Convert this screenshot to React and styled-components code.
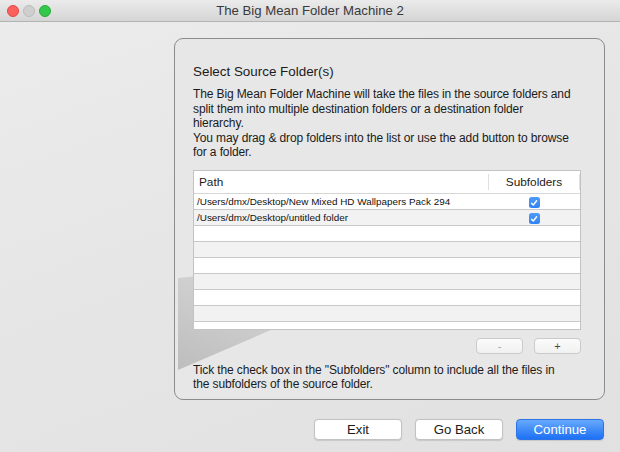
import React from 'react'
import styled, { createGlobalStyle } from 'styled-components'

const GlobalStyle = createGlobalStyle`
  html, body {
    margin: 0;
    padding: 0;
  }
  body {
    font-family: 'Liberation Sans', Arial, sans-serif;
    color: #1b1b1b;
  }
`;

const Window = styled.div`
  width: 620px;
  height: 452px;
  display: flex;
  flex-direction: column;
  background: linear-gradient(160deg, #ececec 0%, #e6e6e6 45%, #e1e1e1 100%);
  overflow: hidden;
`;

const TitleBar = styled.div`
  height: 21px;
  flex-shrink: 0;
  display: grid;
  grid-template-columns: 1fr auto 1fr;
  align-items: center;
  background: linear-gradient(#ebebeb, #d5d5d5);
  border-bottom: 1px solid #b3b3b3;
`;

const Lights = styled.div`
  display: flex;
  gap: 4px;
  padding-left: 7px;
`;

const Light = styled.span`
  width: 12px;
  height: 12px;
  border-radius: 50%;
  box-sizing: border-box;
  background: ${p => p.$color};
  border: 1px solid ${p => p.$edge};
`;

const Title = styled.div`
  font-size: 13.2px;
  color: #3a3a3a;
`;

const Body = styled.div`
  flex: 1;
  display: flex;
  flex-direction: column;
  align-items: flex-end;
  padding: 16px 15px 0 0;
`;

const Panel = styled.div`
  position: relative;
  box-sizing: border-box;
  width: 431px;
  height: 362px;
  border: 1px solid #8c8c8c;
  border-radius: 9px;
  background: #e7e7e7;
  padding: 25px 23px 0 18px;
  display: flex;
  flex-direction: column;
`;

const Art = styled.svg`
  position: absolute;
  left: 0;
  top: 0;
  pointer-events: none;
`;

const Content = styled.div`
  position: relative;
  display: flex;
  flex-direction: column;
`;

const Heading = styled.h2`
  margin: 0;
  font-size: 13.4px;
  line-height: 16px;
  font-weight: normal;
`;

const Text = styled.p`
  margin: ${p => p.$top || 0}px 0 0;
  padding-right: 8px;
  font-size: 12px;
  letter-spacing: -0.12px;
  line-height: ${p => p.$lh || 14.5}px;
`;

const Table = styled.div`
  margin-top: 10px;
  height: 160px;
  box-sizing: border-box;
  border: 1px solid #c3c3c3;
  background: #fff;
  display: flex;
  flex-direction: column;
`;

const HeaderRow = styled.div`
  height: 22px;
  flex-shrink: 0;
  display: grid;
  grid-template-columns: 294px 1fr;
  align-items: center;
  border-bottom: 1px solid #d6d6d6;
  font-size: 11.8px;
`;

const HeaderCell = styled.div`
  padding-left: ${p => (p.$center ? 0 : 5)}px;
  text-align: ${p => (p.$center ? 'center' : 'left')};
  border-left: ${p => (p.$center ? '1px solid #e0e0e0' : 'none')};
  border-right: ${p => (p.$center ? '1px solid #e0e0e0' : 'none')};
  line-height: 16px;
`;

const Rows = styled.div`
  flex: 1;
  overflow: hidden;
`;

const Row = styled.div`
  height: 15px;
  display: grid;
  grid-template-columns: 294px 1fr;
  align-items: center;
  border-bottom: 1px solid #c9c9c9;
  background: ${p => (p.$alt ? '#f2f2f2' : '#fff')};
  font-size: 9.9px;
`;

const PathCell = styled.div`
  padding-left: 3px;
  white-space: nowrap;
  color: #111;
`;

const CheckCell = styled.div`
  display: flex;
  justify-content: center;
  padding-top: 3px;
`;

const Check = styled.span`
  width: 11px;
  height: 11px;
  border-radius: 2.5px;
  background: linear-gradient(#4c9bfa, #2f83f4);
  display: flex;
  align-items: center;
  justify-content: center;
`;

const ListButtons = styled.div`
  display: flex;
  justify-content: flex-end;
  gap: 11px;
  margin-top: 8px;
`;

const SmallButton = styled.button`
  width: 47px;
  height: 16px;
  padding: 0;
  border: 1px solid #cbcbcb;
  border-radius: 4px;
  background: linear-gradient(#fbfbfb, #f1f1f1);
  color: ${p => (p.$dim ? '#a6a6a6' : '#4a4a4a')};
  font-family: inherit;
  font-size: 11px;
  line-height: 14px;
`;

const Footer = styled.div`
  display: flex;
  gap: 13px;
  margin-top: 19px;
  margin-right: 1px;
`;

const Button = styled.button`
  width: 88px;
  height: 21px;
  padding: 0;
  box-sizing: border-box;
  border-radius: 4px;
  font-family: inherit;
  font-size: 13.2px;
  border: 1px solid ${p => (p.$primary ? '#2c74e6' : '#c2c2c2')};
  background: ${p => (p.$primary ? 'linear-gradient(#67a9fc, #1d70f5)' : '#fff')};
  color: ${p => (p.$primary ? '#fff' : '#1b1b1b')};
  box-shadow: 0 0.5px 1px rgba(0, 0, 0, 0.12);
`;

const rows = [
  { path: '/Users/dmx/Desktop/New Mixed HD Wallpapers Pack 294', checked: true },
  { path: '/Users/dmx/Desktop/untitled folder', checked: true },
  {}, {}, {}, {}, {}, {}, {}, {},
];

const Tick = () => (
  <svg width="8" height="8" viewBox="0 0 8 8">
    <path d="M1.5 4.2 L3.3 6 L6.6 1.8" fill="none" stroke="#fff" strokeWidth="1.4" strokeLinecap="round" strokeLinejoin="round" />
  </svg>
);

export default function App() {
  return (
    <Window>
      <GlobalStyle />
      <TitleBar>
        <Lights>
          <Light $color="#fc605b" $edge="#de4a45" />
          <Light $color="#cfcfcf" $edge="#bcbcbc" />
          <Light $color="#34c84a" $edge="#25a83a" />
        </Lights>
        <Title>The Big Mean Folder Machine 2</Title>
        <div />
      </TitleBar>
      <Body>
        <Panel>
          <Art width="300" height="340">
            <defs>
              <linearGradient id="wedge" x1="0" y1="1" x2="1" y2="0">
                <stop offset="0" stopColor="#bdbdbd" />
                <stop offset="0.55" stopColor="#d6d6d6" />
                <stop offset="1" stopColor="#e6e6e6" />
              </linearGradient>
            </defs>
            <polygon points="3,239 275,214 3,331" fill="url(#wedge)" />
          </Art>
          <Content>
            <Heading>Select Source Folder(s)</Heading>
            <Text $top={7}>
              The Big Mean Folder Machine will take the files in the source folders and
              split them into multiple destination folders or a destination folder hierarchy.
              <br />
              You may drag &amp; drop folders into the list or use the add button to browse
              for a folder.
            </Text>
            <Table>
              <HeaderRow>
                <HeaderCell>Path</HeaderCell>
                <HeaderCell $center>Subfolders</HeaderCell>
              </HeaderRow>
              <Rows>
                {rows.map((r, i) => (
                  <Row key={i} $alt={i % 2 === 1}>
                    <PathCell>{r.path}</PathCell>
                    <CheckCell>
                      {r.checked && (
                        <Check>
                          <Tick />
                        </Check>
                      )}
                    </CheckCell>
                  </Row>
                ))}
              </Rows>
            </Table>
            <ListButtons>
              <SmallButton $dim>-</SmallButton>
              <SmallButton>+</SmallButton>
            </ListButtons>
            <Text $top={9} $lh={14}>
              Tick the check box in the "Subfolders" column to include all the files in
              the subfolders of the source folder.
            </Text>
          </Content>
        </Panel>
        <Footer>
          <Button>Exit</Button>
          <Button>Go Back</Button>
          <Button $primary>Continue</Button>
        </Footer>
      </Body>
    </Window>
  )
}
